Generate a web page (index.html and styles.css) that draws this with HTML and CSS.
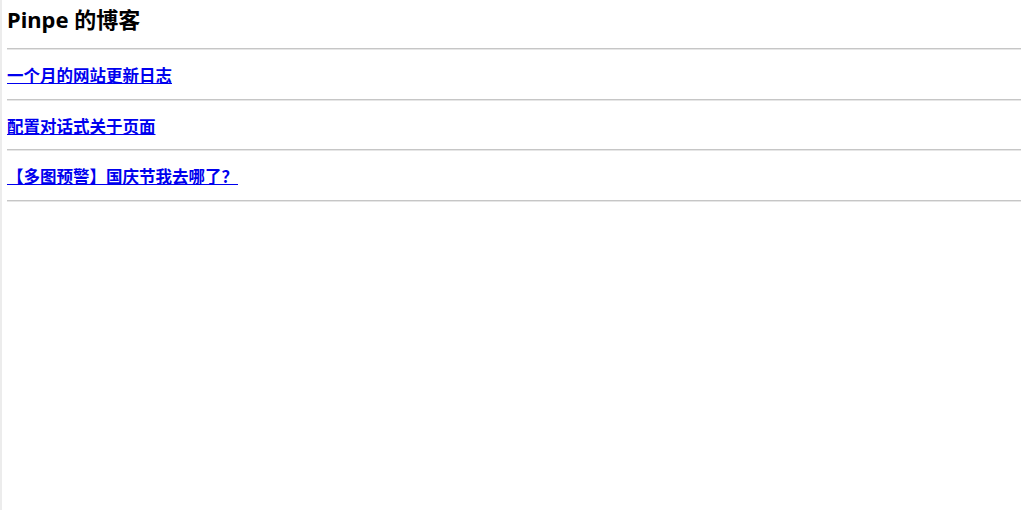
FILE: index.html
```html
<!DOCTYPE html>
<html lang="zh-CN">
<head>
    <meta charset="UTF-8">
    <meta name="viewport" content="width=device-width, initial-scale=1.0">
    <title>Pinpe 的博客</title>
    <link rel="stylesheet" href="styles.css">
</head>
<body>
    <header>
        <h1 class="site-title">Pinpe 的博客</h1>
    </header>
    <hr class="sep">

    <main>
        <!-- 文章列表 -->
        <article class="post">
            <h3 class="post-title"><a href="#">一个月的网站更新日志</a></h3>
        </article>
        <hr class="sep">
        <article class="post">
            <h3 class="post-title"><a href="#">配置对话式关于页面</a></h3>
        </article>
        <hr class="sep">
        <article class="post">
            <h3 class="post-title"><a href="#">【多图预警】国庆节我去哪了？</a></h3>
        </article>
        <hr class="sep">
    </main>
</body>
</html>
```

FILE: styles.css
```css
html, body {
    height: 100%;
}

body {
    margin: 0;
    padding: 0 3px 0 5px;
    font-family: "Noto Sans", "Noto Sans CJK SC", sans-serif;
    color: #000;
    background: #fff;
    border-left: 2px solid #ececec;
    box-sizing: border-box;
}

.site-title {
    margin: 0;
    padding-top: 4px;
    height: 44px;
    font-size: 22px;
    line-height: 30px;
    font-weight: bold;
}

.sep {
    margin: 0;
    height: 0;
    border: 0;
    border-top: 1px solid #c6c6c6;
    border-bottom: 1px solid #e6e6e6;
}

.post-title {
    margin: 0;
    padding-top: 15px;
    height: 33.5px;
    font-size: 16.5px;
    line-height: 22px;
    font-weight: bold;
}

.post-title a {
    color: #0000ee;
}
```
